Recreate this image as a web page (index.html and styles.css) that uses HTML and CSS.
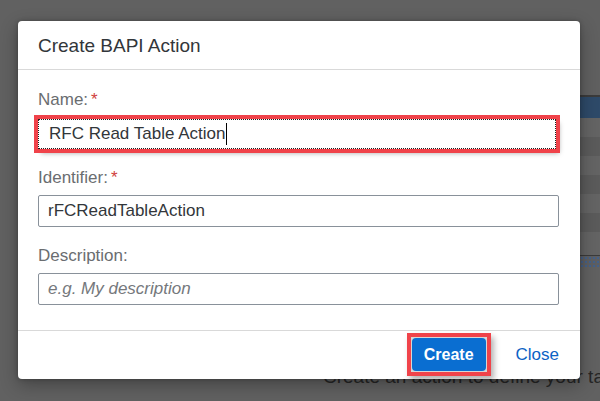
FILE: index.html
```html
<!DOCTYPE html>
<html lang="en">
<head>
<meta charset="utf-8">
<title>Create BAPI Action</title>
<link rel="stylesheet" href="styles.css">
</head>
<body>
<div class="backdrop">
  <div class="bd-upper">
    <div class="bd-side">
      <div class="bd-top"></div>
      <div class="bd-line"></div>
      <div class="bd-bar"></div>
      <div class="bd-row bd-a"></div>
      <div class="bd-row bd-b"></div>
      <div class="bd-row bd-a"></div>
      <div class="bd-row bd-b"></div>
      <div class="bd-row bd-a"></div>
      <div class="bd-row bd-b"></div>
      <div class="bd-row bd-a bd-tall"></div>
      <div class="bd-line thin"></div>
      <div class="bd-dots"></div>
    </div>
  </div>
  <div class="bd-bottom">
    <p class="bd-text">Create an action to define your task</p>
  </div>
</div>

<section class="dialog" role="dialog" aria-label="Create BAPI Action">
  <header class="dlg-header">Create BAPI Action</header>
  <div class="dlg-content">
    <div class="group first">
      <div class="label">Name:<span class="req">*</span></div>
      <div class="field focus"><span class="val">RFC Read Table Action</span><span class="caret"></span></div>
    </div>
    <div class="group">
      <div class="label">Identifier:<span class="req">*</span></div>
      <div class="field"><span class="val">rFCReadTableAction</span></div>
    </div>
    <div class="group">
      <div class="label">Description:</div>
      <div class="field"><span class="placeholder">e.g. My description</span></div>
    </div>
  </div>
  <footer class="dlg-footer">
    <span class="hl"><button class="btn-primary">Create</button></span>
    <a class="btn-link">Close</a>
  </footer>
</section>
</body>
</html>
```
FILE: styles.css
```css
* { box-sizing: border-box; }
html, body { margin: 0; padding: 0; }
body {
  width: 600px;
  height: 401px;
  overflow: hidden;
  background: #616161;
  font-family: "Liberation Sans", Arial, sans-serif;
  position: relative;
}

/* dimmed page behind the modal */
.backdrop {
  display: flex;
  flex-direction: column;
  height: 401px;
  overflow: hidden;
}
.bd-upper {
  display: flex;
  justify-content: flex-end;
}
.bd-side {
  width: 60px;
  display: flex;
  flex-direction: column;
}
.bd-top { height: 95px; background: #606060; }
.bd-line { height: 2px; background: #3b3b3b; }
.bd-line.thin { height: 1px; }
.bd-bar { height: 21px; background: #2e4a69; }
.bd-row { height: 19px; }
.bd-a { background: #646464; }
.bd-b { background: #5b5b5b; }
.bd-tall { height: 23px; }
.bd-dots {
  height: 11px;
  background-color: #5d5f63;
  background-image: radial-gradient(circle, #44618a 1px, transparent 1.3px);
  background-size: 4px 4px;
}
.bd-bottom {
  flex: 1;
  display: flex;
  flex-direction: column;
  justify-content: flex-end;
  padding-bottom: 13px;
  overflow: hidden;
}
.bd-text {
  margin: 0;
  padding-left: 323px;
  font-size: 19px;
  line-height: 22px;
  color: #262626;
  white-space: nowrap;
}

/* modal dialog */
.dialog {
  position: absolute;
  left: 18px;
  top: 21px;
  width: 562px;
  background: #fff;
  border-radius: 4px;
  box-shadow: 0 0 4px rgba(0,0,0,0.25), 0 6px 18px rgba(0,0,0,0.3);
  display: flex;
  flex-direction: column;
}
.dlg-header {
  height: 49px;
  padding: 0 20px;
  border-bottom: 1px solid #d9d9d9;
  font-size: 19px;
  line-height: 50px;
  color: #32363a;
}
.dlg-content {
  padding: 20px 21px 25px 20px;
  display: flex;
  flex-direction: column;
  gap: 19px;
}
.group { display: flex; flex-direction: column; gap: 7px; }
.group.first { gap: 9px; }
.label {
  font-size: 17px;
  line-height: 20px;
  color: #6a6d70;
}
.req { color: #d0403e; margin-left: 3px; }
.field {
  height: 32px;
  border: 1px solid #89919a;
  border-radius: 2px;
  padding: 0 9px;
  font-size: 17px;
  line-height: 30px;
  color: #32363a;
  display: flex;
  align-items: center;
  white-space: nowrap;
}
.field.focus {
  height: 30px;
  margin-right: 3px;
  border: 1px dotted #1d1d1d;
  border-radius: 0;
  padding-left: 10px;
  outline: 4px solid #f0434a;
  box-shadow: 3px 4px 5px rgba(0,0,0,0.35);
}
.caret {
  display: inline-block;
  width: 1px;
  height: 22px;
  background: #000;
  margin-left: 1px;
}
.placeholder { color: #75787c; font-style: italic; }

.dlg-footer {
  height: 49px;
  border-top: 1px solid #d9d9d9;
  display: flex;
  align-items: center;
  justify-content: flex-end;
  gap: 25px;
  padding: 0 21px 1px 0;
}
.hl {
  display: flex;
  padding: 1px;
  border: 4px solid #f0434a;
  background: #d6d6d6;
  box-shadow: 3px 4px 6px rgba(0,0,0,0.3);
}
.btn-primary {
  height: 33px;
  padding: 0 12px;
  border: none;
  border-radius: 4px;
  background: #0a6ed1;
  color: #fff;
  font-family: inherit;
  font-size: 16px;
  font-weight: bold;
}
.btn-link {
  font-size: 17px;
  color: #0b63c5;
  cursor: pointer;
}
```
